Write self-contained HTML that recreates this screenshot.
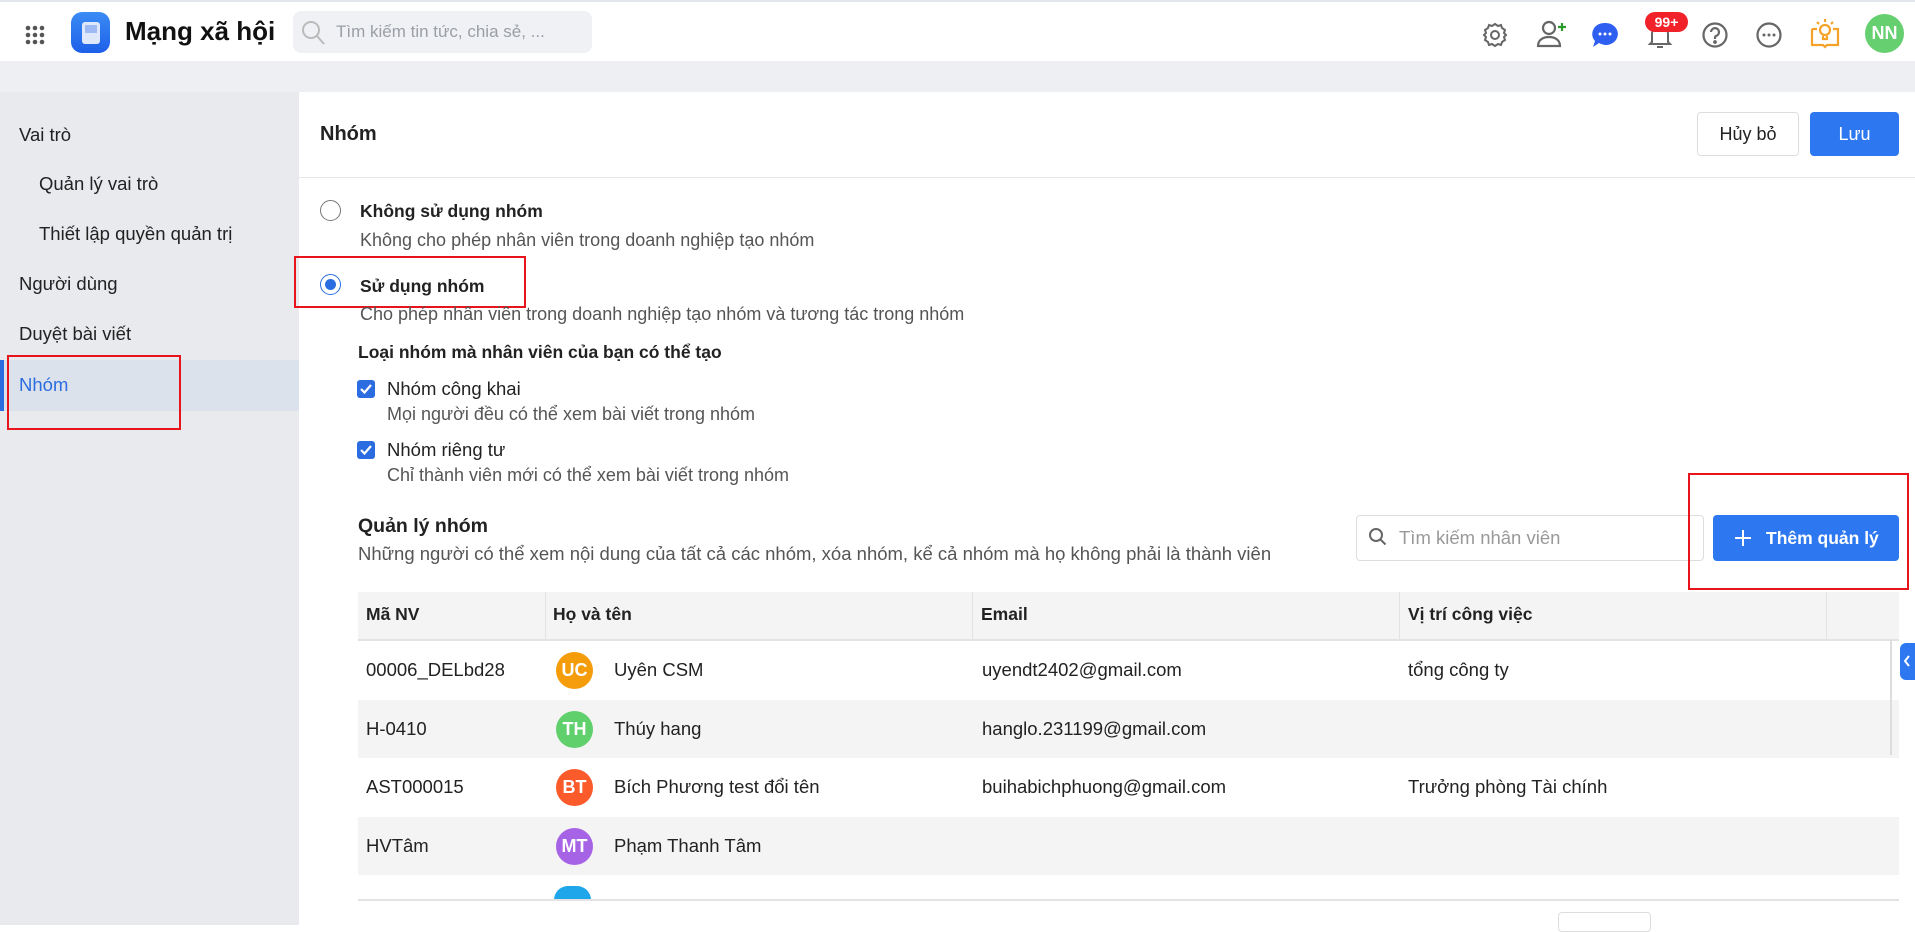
<!DOCTYPE html>
<html><head><meta charset="utf-8"><style>
*{box-sizing:border-box;margin:0;padding:0}
body{width:1915px;height:925px;overflow:hidden;font-family:"Liberation Sans",Arial,sans-serif;color:#222;background:#fff;position:relative}
.abs{position:absolute}
.top{left:0;top:0;width:1915px;height:61px;background:#fff;border-top:2px solid #e3e6ea}
.band{left:0;top:61px;width:1915px;height:31px;background:#eeeff2}
.side{left:0;top:92px;width:299px;height:833px;background:#e9eaee}
.si{position:absolute;font-size:18.5px;color:#222}
.main{left:299px;top:92px;width:1616px;height:833px;background:#fff}
.t{position:absolute;white-space:nowrap}
.desc{font-size:18px;color:#555}
.bold{font-weight:bold}
.red{position:absolute;border:2px solid #e8141b}
.cb{position:absolute;width:18px;height:18px;background:#2b6de0;border-radius:3px}
.row{position:absolute;left:358px;width:1541px;height:58px;font-size:18.5px}
.row .t{top:18px}
.av{position:absolute;left:198px;top:11px;width:37px;height:37px;border-radius:50%;color:#fff;font-weight:bold;font-size:18px;text-align:center;line-height:37px}
</style></head><body>
<div class="abs top">
  <svg class="abs" style="left:24px;top:22px" width="22" height="22"><g fill="#555"><circle cx="4" cy="4" r="2.3"/><circle cx="11" cy="4" r="2.3"/><circle cx="18" cy="4" r="2.3"/><circle cx="4" cy="11" r="2.3"/><circle cx="11" cy="11" r="2.3"/><circle cx="18" cy="11" r="2.3"/><circle cx="4" cy="18" r="2.3"/><circle cx="11" cy="18" r="2.3"/><circle cx="18" cy="18" r="2.3"/></g></svg>
  <div class="abs" style="left:71px;top:10px;width:39px;height:41px;border-radius:11px;background:linear-gradient(#3b8cf5,#1d5fe8)"></div>
  <div class="abs" style="left:82px;top:20px;width:18px;height:22px;border-radius:3px;background:#dfe8fb"></div>
  <div class="abs" style="left:85px;top:23px;width:12px;height:8px;background:#9fbaf2"></div>
  <div class="t" style="left:125px;top:14px;font-size:26px;font-weight:bold;color:#111">Mạng xã hội</div>
  <div class="abs" style="left:293px;top:9px;width:299px;height:42px;border-radius:8px;background:#f0f1f4"></div>
  <svg class="abs" style="left:301px;top:17px" width="26" height="28"><circle cx="10" cy="11" r="8" fill="none" stroke="#bbb" stroke-width="2"/><path d="M16 17l7 8" stroke="#bbb" stroke-width="2"/></svg>
  <div class="t" style="left:336px;top:20px;font-size:17px;color:#9a9ea6">Tìm kiếm tin tức, chia sẻ, ...</div>
  <svg class="abs" style="left:1481px;top:19px" width="28" height="28" fill="none" stroke="#666" stroke-width="2"><circle cx="14" cy="14" r="4"/><path d="M14 3l3 2 3-1 1 3 3 2-1 3 2 2-2 2 1 3-3 2-1 3-3-1-3 2-3-2-3 1-1-3-3-2 1-3-2-2 2-2-1-3 3-2 1-3 3 1z"/></svg>
  <svg class="abs" style="left:1535px;top:17px" width="34" height="30" fill="none" stroke="#666" stroke-width="2.2"><circle cx="14" cy="9" r="6"/><path d="M3 27c0-6 5-9 11-9s11 3 11 9z"/><path d="M27 4v8M23 8h8" stroke="#2a9a2a"/></svg>
  <svg class="abs" style="left:1591px;top:19px" width="28" height="28"><path d="M14 2a12 11 0 1 1-6 20l-6 4 2-6A12 11 0 0 1 14 2z" fill="#2f5ff0"/><g fill="#fff"><circle cx="9" cy="13" r="1.5"/><circle cx="14" cy="13" r="1.5"/><circle cx="19" cy="13" r="1.5"/></g></svg>
  <svg class="abs" style="left:1647px;top:20px" width="26" height="28" fill="none" stroke="#666" stroke-width="2"><path d="M5 20V12a8 8 0 0 1 16 0v8l2 2H3z"/><path d="M10 25h6"/></svg>
  <div class="abs" style="left:1645px;top:10px;width:43px;height:20px;border-radius:10px;background:#f2222a;color:#fff;font-weight:bold;font-size:14px;text-align:center;line-height:20px">99+</div>
  <svg class="abs" style="left:1701px;top:19px" width="28" height="28" fill="none" stroke="#666" stroke-width="2.2"><circle cx="14" cy="14" r="11.5"/><path d="M10 11a4 4 0 1 1 5 4c-1 .5-1 1-1 3"/><circle cx="14" cy="21" r=".8" fill="#666"/></svg>
  <svg class="abs" style="left:1755px;top:19px" width="28" height="28"><circle cx="14" cy="14" r="11.5" fill="none" stroke="#666" stroke-width="2.2"/><g fill="#666"><circle cx="9" cy="14" r="1.5"/><circle cx="14" cy="14" r="1.5"/><circle cx="19" cy="14" r="1.5"/></g></svg>
  <svg class="abs" style="left:1810px;top:15px" width="30" height="32" fill="none" stroke="#f5a22a" stroke-width="2.2"><path d="M2 12v16h11l2 2 2-2h11V12h-5"/><path d="M7 12h-5"/><circle cx="15" cy="13" r="5"/><path d="M13 19v3h4v-3M15 2v3M7 5l2 2M23 5l-2 2"/></svg>
  <div class="abs" style="left:1865px;top:12px;width:39px;height:39px;border-radius:50%;background:#66cf70;color:#fff;font-weight:bold;font-size:18px;text-align:center;line-height:39px">NN</div>
</div>
<div class="abs band"></div>
<div class="abs side">
  <div class="si" style="left:19px;top:32px">Vai trò</div>
  <div class="si" style="left:39px;top:81px">Quản lý vai trò</div>
  <div class="si" style="left:39px;top:131px">Thiết lập quyền quản trị</div>
  <div class="si" style="left:19px;top:181px">Người dùng</div>
  <div class="si" style="left:19px;top:231px">Duyệt bài viết</div>
  <div class="abs" style="left:0;top:268px;width:299px;height:51px;background:#dce2ec;border-left:4px solid #2b6de0"></div>
  <div class="si" style="left:19px;top:282px;color:#2b6de0">Nhóm</div>
</div>
<div class="red" style="left:7px;top:355px;width:174px;height:75px"></div>
<div class="abs main"></div>
<div class="t bold" style="left:320px;top:123px;font-size:20px">Nhóm</div>
<div class="abs" style="left:1697px;top:112px;width:102px;height:44px;border:1px solid #ddd;border-radius:4px;font-size:18px;text-align:center;line-height:42px">Hủy bỏ</div>
<div class="abs" style="left:1810px;top:112px;width:89px;height:44px;background:#2d78f0;border-radius:4px;color:#fff;font-size:18px;text-align:center;line-height:44px">Lưu</div>
<div class="abs" style="left:299px;top:177px;width:1616px;height:1px;background:#e6e6e6"></div>

<div class="abs" style="left:320px;top:200px;width:21px;height:21px;border-radius:50%;border:1.5px solid #777"></div>
<div class="t bold" style="left:360px;top:201px;font-size:17.5px">Không sử dụng nhóm</div>
<div class="t desc" style="left:360px;top:230px">Không cho phép nhân viên trong doanh nghiệp tạo nhóm</div>
<div class="abs" style="left:320px;top:274px;width:21px;height:21px;border-radius:50%;border:1.5px solid #2b6de0"></div>
<div class="abs" style="left:325px;top:279px;width:11px;height:11px;border-radius:50%;background:#2b6de0"></div>
<div class="t bold" style="left:360px;top:276px;font-size:17.5px">Sử dụng nhóm</div>
<div class="red" style="left:294px;top:256px;width:232px;height:52px"></div>
<div class="t desc" style="left:360px;top:304px">Cho phép nhân viên trong doanh nghiệp tạo nhóm và tương tác trong nhóm</div>
<div class="t bold" style="left:358px;top:342px;font-size:17.5px">Loại nhóm mà nhân viên của bạn có thể tạo</div>
<div class="cb" style="left:357px;top:380px"></div>
<svg class="abs" style="left:357px;top:380px" width="18" height="18"><path d="M4 9l3.5 3.5L14 5" fill="none" stroke="#fff" stroke-width="2.2"/></svg>
<div class="t" style="left:387px;top:378px;font-size:18.5px">Nhóm công khai</div>
<div class="t desc" style="left:387px;top:404px">Mọi người đều có thể xem bài viết trong nhóm</div>
<div class="cb" style="left:357px;top:441px"></div>
<svg class="abs" style="left:357px;top:441px" width="18" height="18"><path d="M4 9l3.5 3.5L14 5" fill="none" stroke="#fff" stroke-width="2.2"/></svg>
<div class="t" style="left:387px;top:439px;font-size:18.5px">Nhóm riêng tư</div>
<div class="t desc" style="left:387px;top:465px">Chỉ thành viên mới có thể xem bài viết trong nhóm</div>

<div class="t bold" style="left:358px;top:515px;font-size:19.5px">Quản lý nhóm</div>
<div class="t desc" style="left:358px;top:543px;font-size:18.5px">Những người có thể xem nội dung của tất cả các nhóm, xóa nhóm, kể cả nhóm mà họ không phải là thành viên</div>
<div class="abs" style="left:1356px;top:515px;width:348px;height:46px;border:1px solid #ddd;border-radius:4px"></div>
<svg class="abs" style="left:1368px;top:527px" width="20" height="22" fill="none" stroke="#666" stroke-width="2"><circle cx="8" cy="8" r="6"/><path d="M12.5 12.5l5 5"/></svg>
<div class="t" style="left:1399px;top:527px;font-size:18.5px;color:#999">Tìm kiếm nhân viên</div>
<div class="abs" style="left:1713px;top:515px;width:186px;height:46px;background:#2d78f0;border-radius:4px;color:#fff;font-weight:bold;font-size:17.5px;line-height:46px;padding-left:53px">Thêm quản lý</div>
<svg class="abs" style="left:1733px;top:528px" width="20" height="20"><path d="M10 2v16M2 10h16" stroke="#fff" stroke-width="2"/></svg>
<div class="red" style="left:1688px;top:473px;width:221px;height:117px"></div>

<div class="abs" style="left:358px;top:592px;width:1541px;height:49px;background:#f4f4f4;border-bottom:2px solid #e3e3e3"></div>
<div class="abs" style="left:545px;top:592px;width:1px;height:49px;background:#e3e3e3"></div>
<div class="abs" style="left:972px;top:592px;width:1px;height:49px;background:#e3e3e3"></div>
<div class="abs" style="left:1399px;top:592px;width:1px;height:49px;background:#e3e3e3"></div>
<div class="abs" style="left:1826px;top:592px;width:1px;height:49px;background:#e3e3e3"></div>
<div class="t bold" style="left:366px;top:604px;font-size:17.5px">Mã NV</div>
<div class="t bold" style="left:553px;top:604px;font-size:17.5px">Họ và tên</div>
<div class="t bold" style="left:981px;top:604px;font-size:17.5px">Email</div>
<div class="t bold" style="left:1408px;top:604px;font-size:17.5px">Vị trí công việc</div>

<div class="row" style="top:641px"><div class="t" style="left:8px">00006_DELbd28</div><div class="av" style="background:#f59c0b">UC</div><div class="t" style="left:256px">Uyên CSM</div><div class="t" style="left:624px">uyendt2402@gmail.com</div><div class="t" style="left:1050px">tổng công ty</div></div>
<div class="row" style="top:700px;background:#f4f4f4"><div class="t" style="left:8px">H-0410</div><div class="av" style="background:#5fd06c">TH</div><div class="t" style="left:256px">Thúy hang</div><div class="t" style="left:624px">hanglo.231199@gmail.com</div></div>
<div class="row" style="top:758px"><div class="t" style="left:8px">AST000015</div><div class="av" style="background:#fb5a2a">BT</div><div class="t" style="left:256px">Bích Phương test đổi tên</div><div class="t" style="left:624px">buihabichphuong@gmail.com</div><div class="t" style="left:1050px">Trưởng phòng Tài chính</div></div>
<div class="row" style="top:817px;background:#f4f4f4"><div class="t" style="left:8px">HVTâm</div><div class="av" style="background:#a763e6">MT</div><div class="t" style="left:256px">Phạm Thanh Tâm</div></div>
<div class="abs" style="left:554px;top:886px;width:37px;height:14px;border-radius:18px 18px 0 0;background:#1ea5ea"></div>
<div class="abs" style="left:358px;top:899px;width:1541px;height:2px;background:#e3e3e3"></div>
<div class="abs" style="left:1558px;top:912px;width:93px;height:20px;border:1px solid #ddd;border-radius:4px"></div>
<div class="abs" style="left:1890px;top:640px;width:2px;height:115px;background:#ddd"></div>
<div class="abs" style="left:1900px;top:643px;width:15px;height:37px;background:#2d78f0;border-radius:6px 0 0 6px"></div>
<svg class="abs" style="left:1902px;top:654px" width="10" height="14"><path d="M7 2L3 7l4 5" fill="none" stroke="#fff" stroke-width="2"/></svg>
</body></html>
